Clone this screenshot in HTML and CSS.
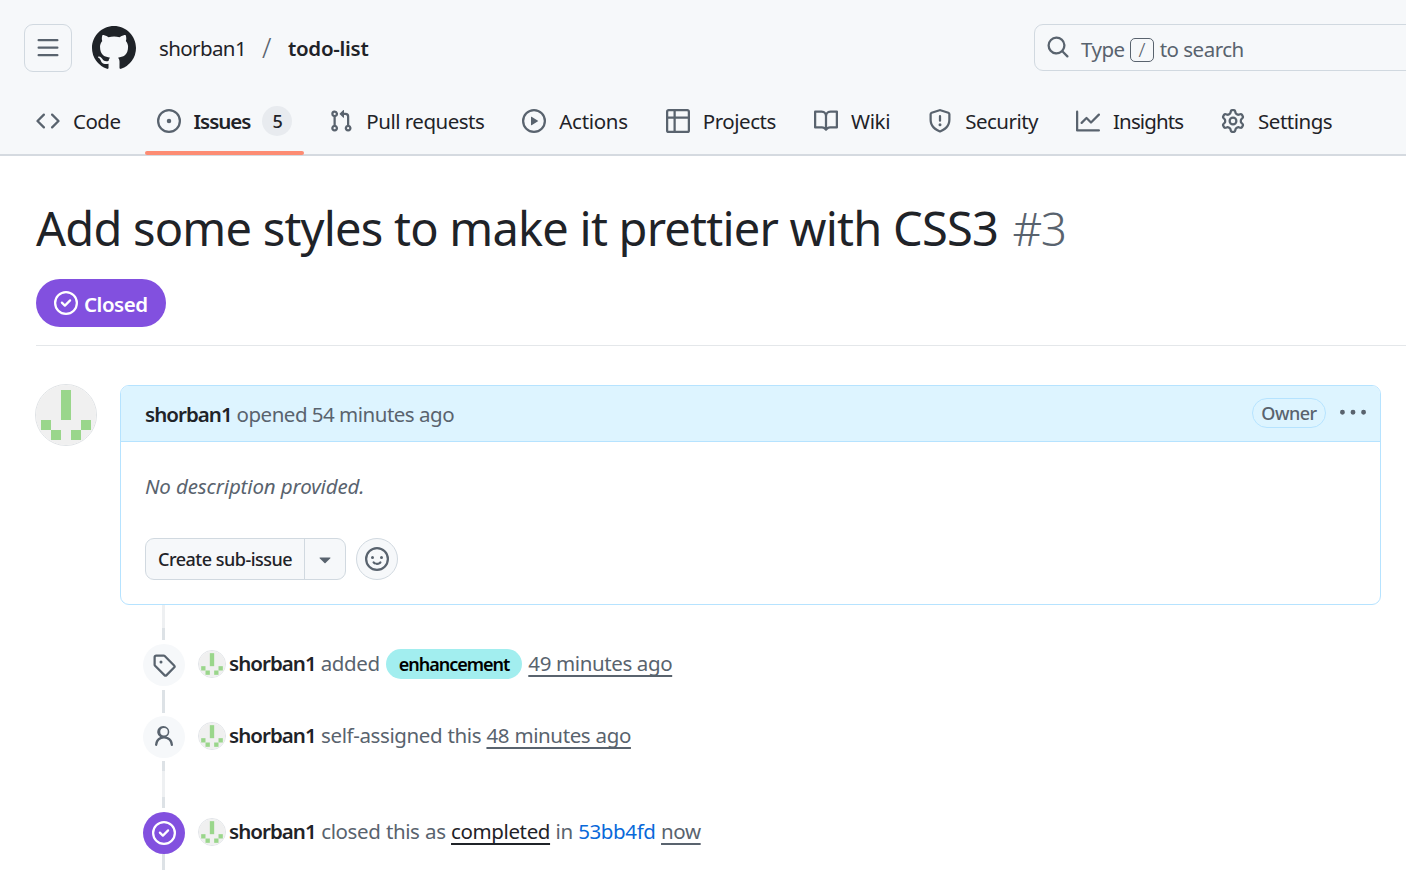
FILE: index.html
```html
<!DOCTYPE html>
<html lang="en">
<head>
<meta charset="utf-8">
<title>Add some styles to make it prettier with CSS3 #3</title>
<link rel="stylesheet" href="styles.css">
</head>
<body>
<svg class="defs" aria-hidden="true">
  <symbol id="i-bars" viewBox="0 0 16 16"><path d="M1 2.75A.75.75 0 0 1 1.75 2h12.5a.75.75 0 0 1 0 1.5H1.75A.75.75 0 0 1 1 2.75Zm0 5A.75.75 0 0 1 1.75 7h12.5a.75.75 0 0 1 0 1.5H1.75A.75.75 0 0 1 1 7.75ZM1.75 12h12.5a.75.75 0 0 1 0 1.5H1.75a.75.75 0 0 1 0-1.5Z"/></symbol>
  <symbol id="i-github" viewBox="0 0 16 16"><path d="M8 0c4.42 0 8 3.58 8 8a8.013 8.013 0 0 1-5.45 7.59c-.4.08-.55-.17-.55-.38 0-.27.01-1.13.01-2.2 0-.75-.25-1.23-.54-1.48 1.78-.2 3.65-.88 3.65-3.95 0-.88-.31-1.59-.82-2.15.08-.2.36-1.02-.08-2.12 0 0-.67-.22-2.2.82-.64-.18-1.32-.27-2-.27-.68 0-1.36.09-2 .27-1.53-1.03-2.2-.82-2.2-.82-.44 1.1-.16 1.92-.08 2.12-.51.56-.82 1.28-.82 2.15 0 3.06 1.86 3.75 3.64 3.95-.23.2-.44.55-.51 1.07-.46.21-1.61.55-2.33-.66-.15-.24-.6-.83-1.23-.82-.67.01-.27.38.01.53.34.19.73.9.82 1.13.16.45.68 1.31 2.69.94 0 .67.01 1.3.01 1.49 0 .21-.15.45-.55.38A7.995 7.995 0 0 1 0 8c0-4.42 3.58-8 8-8Z"/></symbol>
  <symbol id="i-code" viewBox="0 0 16 16"><path d="m11.28 3.22 4.25 4.25a.75.75 0 0 1 0 1.06l-4.25 4.25a.749.749 0 0 1-1.275-.326.749.749 0 0 1 .215-.734L13.94 8l-3.72-3.72a.749.749 0 0 1 .326-1.275.749.749 0 0 1 .734.215Zm-6.56 0a.751.751 0 0 1 1.042.018.751.751 0 0 1 .018 1.042L2.06 8l3.72 3.72a.749.749 0 0 1-.326 1.275.749.749 0 0 1-.734-.215L.47 8.53a.75.75 0 0 1 0-1.06Z"/></symbol>
  <symbol id="i-issue" viewBox="0 0 16 16"><path d="M8 9.5a1.5 1.5 0 1 0 0-3 1.5 1.5 0 0 0 0 3Z"/><path d="M8 0a8 8 0 1 1 0 16A8 8 0 0 1 8 0ZM1.5 8a6.5 6.5 0 1 0 13 0 6.5 6.5 0 0 0-13 0Z"/></symbol>
  <symbol id="i-pr" viewBox="0 0 16 16"><path d="M1.5 3.25a2.25 2.25 0 1 1 3 2.122v5.256a2.251 2.251 0 1 1-1.5 0V5.372A2.25 2.25 0 0 1 1.5 3.25Zm5.677-.177L9.573.677A.25.25 0 0 1 10 .854V2.5h1A2.5 2.5 0 0 1 13.5 5v5.628a2.251 2.251 0 1 1-1.5 0V5a1 1 0 0 0-1-1h-1v1.646a.25.25 0 0 1-.427.177L7.177 3.427a.25.25 0 0 1 0-.354ZM3.75 2.5a.75.75 0 1 0 0 1.5.75.75 0 0 0 0-1.5Zm0 9.5a.75.75 0 1 0 0 1.5.75.75 0 0 0 0-1.5Zm8.25.75a.75.75 0 1 0 1.5 0 .75.75 0 0 0-1.5 0Z"/></symbol>
  <symbol id="i-play" viewBox="0 0 16 16"><path d="M8 0a8 8 0 1 1 0 16A8 8 0 0 1 8 0ZM1.5 8a6.5 6.5 0 1 0 13 0 6.5 6.5 0 0 0-13 0Zm4.879-2.773 4.264 2.559a.25.25 0 0 1 0 .428l-4.264 2.559A.25.25 0 0 1 6 10.559V5.442a.25.25 0 0 1 .379-.215Z"/></symbol>
  <symbol id="i-table" viewBox="0 0 16 16"><path d="M0 1.75C0 .784.784 0 1.75 0h12.5C15.216 0 16 .784 16 1.75v12.5A1.75 1.75 0 0 1 14.25 16H1.75A1.75 1.75 0 0 1 0 14.25ZM6.5 6.5v8h7.75a.25.25 0 0 0 .25-.25V6.5Zm8-1.5V1.75a.25.25 0 0 0-.25-.25H6.5V5Zm-13 1.5v7.75c0 .138.112.25.25.25H5v-8ZM5 5V1.5H1.75a.25.25 0 0 0-.25.25V5Z"/></symbol>
  <symbol id="i-book" viewBox="0 0 16 16"><path d="M0 1.75A.75.75 0 0 1 .75 1h4.253c1.227 0 2.317.59 3 1.501A3.743 3.743 0 0 1 11.006 1h4.245a.75.75 0 0 1 .75.75v10.5a.75.75 0 0 1-.75.75h-4.507a2.25 2.25 0 0 0-1.591.659l-.622.621a.75.75 0 0 1-1.06 0l-.622-.621A2.25 2.25 0 0 0 5.258 13H.75a.75.75 0 0 1-.75-.75Zm7.251 10.324.004-5.073-.002-2.253A2.25 2.25 0 0 0 5.003 2.5H1.5v9h3.757a3.75 3.75 0 0 1 1.994.574ZM8.755 4.75l-.004 7.322a3.752 3.752 0 0 1 1.992-.572H14.5v-9h-3.495a2.25 2.25 0 0 0-2.25 2.25Z"/></symbol>
  <symbol id="i-shield" viewBox="0 0 16 16"><path d="M7.467.133a1.748 1.748 0 0 1 1.066 0l5.25 1.68A1.75 1.75 0 0 1 15 3.48V7c0 1.566-.32 3.182-1.303 4.682-.983 1.498-2.585 2.813-5.032 3.855a1.697 1.697 0 0 1-1.33 0c-2.447-1.042-4.049-2.357-5.032-3.855C1.32 10.182 1 8.566 1 7V3.48a1.75 1.75 0 0 1 1.217-1.667Zm.61 1.429a.25.25 0 0 0-.153 0l-5.25 1.68a.25.25 0 0 0-.174.238V7c0 1.358.275 2.666 1.057 3.86.784 1.194 2.121 2.34 4.366 3.297a.196.196 0 0 0 .154 0c2.245-.956 3.582-2.104 4.366-3.298C13.225 9.666 13.5 8.36 13.5 7V3.48a.251.251 0 0 0-.174-.237l-5.25-1.68ZM8.75 4.75v3a.75.75 0 0 1-1.5 0v-3a.75.75 0 0 1 1.5 0ZM9 10.5a1 1 0 1 1-2 0 1 1 0 0 1 2 0Z"/></symbol>
  <symbol id="i-graph" viewBox="0 0 16 16"><path d="M1.5 1.75V13.5h13.75a.75.75 0 0 1 0 1.5H.75a.75.75 0 0 1-.75-.75V1.75a.75.75 0 0 1 1.5 0Zm14.28 2.53-5.25 5.25a.75.75 0 0 1-1.06 0L7 7.06 4.28 9.78a.751.751 0 0 1-1.042-.018.751.751 0 0 1-.018-1.042l3.25-3.25a.75.75 0 0 1 1.06 0L10 7.94l4.72-4.72a.751.751 0 0 1 1.042.018.751.751 0 0 1 .018 1.042Z"/></symbol>
  <symbol id="i-gear" viewBox="0 0 16 16"><path d="M8 0a8.2 8.2 0 0 1 .701.031C9.444.095 9.99.645 10.16 1.29l.288 1.107c.018.066.079.158.212.224.231.114.454.243.668.386.123.082.233.09.299.071l1.103-.303c.644-.176 1.392.021 1.82.63.27.385.506.792.704 1.218.315.675.111 1.422-.364 1.891l-.814.806c-.049.048-.098.147-.088.294.016.257.016.515 0 .772-.01.147.038.246.088.294l.814.806c.475.469.679 1.216.364 1.891a7.977 7.977 0 0 1-.704 1.217c-.428.61-1.176.807-1.82.63l-1.102-.302c-.067-.019-.177-.011-.3.071a5.909 5.909 0 0 1-.668.386c-.133.066-.194.158-.211.224l-.29 1.106c-.168.646-.715 1.196-1.458 1.26a8.006 8.006 0 0 1-1.402 0c-.743-.064-1.289-.614-1.458-1.26l-.289-1.106c-.018-.066-.079-.158-.212-.224a5.738 5.738 0 0 1-.668-.386c-.123-.082-.233-.09-.299-.071l-1.103.303c-.644.176-1.392-.021-1.82-.63a8.12 8.12 0 0 1-.704-1.218c-.315-.675-.111-1.422.363-1.891l.815-.806c.05-.048.098-.147.088-.294a6.214 6.214 0 0 1 0-.772c.01-.147-.038-.246-.088-.294l-.815-.806C.635 6.045.431 5.298.746 4.623a7.92 7.92 0 0 1 .704-1.217c.428-.61 1.176-.807 1.82-.63l1.102.302c.067.019.177.011.3-.071.214-.143.437-.272.668-.386.133-.066.194-.158.211-.224l.29-1.106C6.009.645 6.556.095 7.299.03 7.53.01 7.764 0 8 0Zm-.571 1.525c-.036.003-.108.036-.137.146l-.289 1.105c-.147.561-.549.967-.998 1.189-.173.086-.34.183-.5.29-.417.278-.97.423-1.529.27l-1.103-.303c-.109-.03-.175.016-.195.045-.22.312-.412.644-.573.99-.014.031-.021.11.059.19l.815.806c.411.406.562.957.53 1.456a4.709 4.709 0 0 0 0 .582c.032.499-.119 1.05-.53 1.456l-.815.806c-.081.08-.073.159-.059.19.162.346.353.677.573.989.02.03.085.076.195.046l1.102-.303c.56-.153 1.113-.008 1.53.27.161.107.328.204.501.29.447.222.85.629.997 1.189l.289 1.105c.029.109.101.143.137.146a6.6 6.6 0 0 0 1.142 0c.036-.003.108-.036.137-.146l.289-1.105c.147-.561.549-.967.998-1.189.173-.086.34-.183.5-.29.417-.278.97-.423 1.529-.27l1.103.303c.109.029.175-.016.195-.045.22-.313.411-.644.573-.99.014-.031.021-.11-.059-.19l-.815-.806c-.411-.406-.562-.957-.53-1.456a4.709 4.709 0 0 0 0-.582c-.032-.499.119-1.05.53-1.456l.815-.806c.081-.08.073-.159.059-.19a6.464 6.464 0 0 0-.573-.989c-.02-.03-.085-.076-.195-.046l-1.102.303c-.56.153-1.113.008-1.53-.27a4.44 4.44 0 0 0-.501-.29c-.447-.222-.85-.629-.997-1.189l-.289-1.105c-.029-.11-.101-.143-.137-.146a6.6 6.6 0 0 0-1.142 0ZM11 8a3 3 0 1 1-6 0 3 3 0 0 1 6 0ZM9.5 8a1.5 1.5 0 1 0-3.001.001A1.5 1.5 0 0 0 9.5 8Z"/></symbol>
  <symbol id="i-search" viewBox="0 0 16 16"><path d="M10.68 11.74a6 6 0 0 1-7.922-8.982 6 6 0 0 1 8.982 7.922l3.04 3.04a.749.749 0 0 1-.326 1.275.749.749 0 0 1-.734-.215ZM11.5 7a4.499 4.499 0 1 0-8.997 0A4.499 4.499 0 0 0 11.5 7Z"/></symbol>
  <symbol id="i-closed" viewBox="0 0 16 16"><path d="M11.28 6.78a.75.75 0 0 0-1.06-1.06L7.25 8.69 5.78 7.22a.75.75 0 0 0-1.06 1.06l2 2a.75.75 0 0 0 1.06 0l3.5-3.5Z"/><path d="M16 8A8 8 0 1 1 0 8a8 8 0 0 1 16 0Zm-1.5 0a6.5 6.5 0 1 0-13 0 6.5 6.5 0 0 0 13 0Z"/></symbol>
  <symbol id="i-kebab" viewBox="0 0 16 16"><path d="M8 9a1.5 1.5 0 1 0 0-3 1.5 1.5 0 0 0 0 3ZM1.5 9a1.5 1.5 0 1 0 0-3 1.5 1.5 0 0 0 0 3Zm13 0a1.5 1.5 0 1 0 0-3 1.5 1.5 0 0 0 0 3Z"/></symbol>
  <symbol id="i-caret" viewBox="0 0 16 16"><path d="m4.427 7.427 3.396 3.396a.25.25 0 0 0 .354 0l3.396-3.396A.25.25 0 0 0 11.396 7H4.604a.25.25 0 0 0-.177.427Z"/></symbol>
  <symbol id="i-smiley" viewBox="0 0 16 16"><path d="M8 0a8 8 0 1 1 0 16A8 8 0 0 1 8 0ZM1.5 8a6.5 6.5 0 1 0 13 0 6.5 6.5 0 0 0-13 0Zm3.82 1.636a.75.75 0 0 1 1.038.175l.007.009c.103.118.22.222.35.31.264.178.683.37 1.285.37.602 0 1.02-.192 1.285-.371.13-.088.247-.192.35-.31l.007-.008a.75.75 0 0 1 1.222.87l-.022-.015c.02.013.021.015.021.015v.001l-.001.002-.002.003-.005.007-.014.019a2.066 2.066 0 0 1-.184.213c-.16.166-.338.316-.53.445-.63.418-1.37.638-2.127.629-.946 0-1.652-.308-2.126-.63a3.331 3.331 0 0 1-.715-.657l-.014-.02-.005-.006-.002-.003v-.002h-.001l.613-.432-.614.43a.75.75 0 0 1 .183-1.044ZM12 7a1 1 0 1 1-2 0 1 1 0 0 1 2 0ZM5 8a1 1 0 1 1 0-2 1 1 0 0 1 0 2Zm5.25 2.25.592.416a97.71 97.71 0 0 0-.592-.416Z"/></symbol>
  <symbol id="i-tag" viewBox="0 0 16 16"><path d="M1 7.775V2.75C1 1.784 1.784 1 2.75 1h5.025c.464 0 .91.184 1.238.513l6.25 6.25a1.75 1.75 0 0 1 0 2.474l-5.026 5.026a1.75 1.75 0 0 1-2.474 0l-6.25-6.25A1.75 1.75 0 0 1 1 7.775Zm1.5 0c0 .066.026.13.073.177l6.25 6.25a.25.25 0 0 0 .354 0l5.025-5.025a.25.25 0 0 0 0-.354l-6.25-6.25a.25.25 0 0 0-.177-.073H2.75a.25.25 0 0 0-.25.25ZM6 5a1 1 0 1 1 0 2 1 1 0 0 1 0-2Z"/></symbol>
  <symbol id="i-person" viewBox="0 0 16 16"><path d="M10.561 8.073a6.005 6.005 0 0 1 3.432 5.142.75.75 0 1 1-1.498.07 4.5 4.5 0 0 0-8.99 0 .75.75 0 0 1-1.498-.07 6.004 6.004 0 0 1 3.431-5.142 3.999 3.999 0 1 1 4.123 0ZM10.5 4.5a2.5 2.5 0 1 0-5 0 2.5 2.5 0 0 0 5 0Z"/></symbol>
  <symbol id="i-avatar" viewBox="0 0 60 60"><rect width="60" height="60" fill="#f0f0f0"/><rect x="25" y="5" width="10" height="30" fill="#9ad68b"/><rect x="5" y="35" width="10" height="10" fill="#9ad68b"/><rect x="45" y="35" width="10" height="10" fill="#9ad68b"/><rect x="15" y="45" width="10" height="10" fill="#9ad68b"/><rect x="35" y="45" width="10" height="10" fill="#9ad68b"/></symbol>
</svg>

<header class="app-header">
  <div class="top-row">
    <button class="menu-btn"><svg class="icon"><use href="#i-bars"/></svg></button>
    <svg class="logo"><use href="#i-github"/></svg>
    <nav class="crumbs">
      <span class="owner">shorban1</span>
      <span class="slash">/</span>
      <span class="repo">todo-list</span>
    </nav>
    <div class="search">
      <svg class="icon"><use href="#i-search"/></svg>
      <span class="search-text">Type</span>
      <kbd class="slash-key">/</kbd>
      <span class="search-text search-rest">to search</span>
    </div>
  </div>
  <nav class="tabs">
    <a class="tab"><svg class="icon"><use href="#i-code"/></svg><span class="tab-text">Code</span></a>
    <a class="tab active"><svg class="icon"><use href="#i-issue"/></svg><span class="tab-text tab-strong">Issues</span><span class="counter">5</span></a>
    <a class="tab"><svg class="icon"><use href="#i-pr"/></svg><span class="tab-text">Pull requests</span></a>
    <a class="tab"><svg class="icon"><use href="#i-play"/></svg><span class="tab-text text-actions">Actions</span></a>
    <a class="tab"><svg class="icon"><use href="#i-table"/></svg><span class="tab-text text-projects">Projects</span></a>
    <a class="tab"><svg class="icon"><use href="#i-book"/></svg><span class="tab-text text-wiki">Wiki</span></a>
    <a class="tab"><svg class="icon"><use href="#i-shield"/></svg><span class="tab-text">Security</span></a>
    <a class="tab"><svg class="icon"><use href="#i-graph"/></svg><span class="tab-text text-insights">Insights</span></a>
    <a class="tab"><svg class="icon"><use href="#i-gear"/></svg><span class="tab-text">Settings</span></a>
  </nav>
</header>

<main class="issue">
  <h1 class="issue-title">Add some styles to make it prettier with CSS3 <span class="issue-num">#3</span></h1>
  <div class="state-row">
    <span class="state"><svg class="icon"><use href="#i-closed"/></svg><span class="state-text">Closed</span></span>
  </div>

  <section class="discussion">
    <div class="comment-row">
      <svg class="avatar-lg"><use href="#i-avatar"/></svg>
      <article class="comment">
        <div class="comment-head">
          <span class="meta"><b class="author">shorban1</b> opened 54 minutes ago</span>
          <span class="owner-pill">Owner</span>
          <svg class="icon kebab"><use href="#i-kebab"/></svg>
        </div>
        <div class="comment-body">
          <p class="empty">No description provided.</p>
          <div class="actions">
            <div class="split">
              <span class="split-main">Create sub-issue</span>
              <span class="split-caret"><svg class="icon"><use href="#i-caret"/></svg></span>
            </div>
            <span class="react"><svg class="icon"><use href="#i-smiley"/></svg></span>
          </div>
        </div>
      </article>
    </div>

    <div class="timeline">
      <div class="event ev-label">
        <span class="badge"><svg class="icon"><use href="#i-tag"/></svg></span>
        <svg class="avatar-sm"><use href="#i-avatar"/></svg>
        <span class="meta"><b class="author">shorban1</b> added <span class="label">enhancement</span> <a class="time">49 minutes ago</a></span>
      </div>
      <div class="event ev-assign">
        <span class="badge"><svg class="icon"><use href="#i-person"/></svg></span>
        <svg class="avatar-sm"><use href="#i-avatar"/></svg>
        <span class="meta"><b class="author">shorban1</b> self-assigned this <a class="time">48 minutes ago</a></span>
      </div>
      <div class="event ev-closed">
        <span class="badge badge-done"><svg class="icon"><use href="#i-closed"/></svg></span>
        <svg class="avatar-sm"><use href="#i-avatar"/></svg>
        <span class="meta"><b class="author">shorban1</b> closed this as <a class="time time-dark">completed</a> in <a class="sha">53bb4fd</a> <a class="time">now</a></span>
      </div>
    </div>
  </section>
</main>
</body>
</html>
```

FILE: styles.css
```css
* { box-sizing: border-box; }
html, body { margin: 0; padding: 0; height: 100%; }
body {
  width: 1406px;
  height: 888px;
  overflow: hidden;
  background: #fff;
  color: #1f2328;
  font-family: "Noto Sans", "Open Sans", sans-serif;
  font-size: 20.5px;
  letter-spacing: -0.5px;
}
.defs { display: none; }
.icon { width: 24px; height: 24px; fill: #59636e; flex: none; display: block; }

.app-header { background: #f6f8fa; height: 156px; border-bottom: 2px solid #d5dae0; }
.top-row { display: flex; align-items: center; height: 96px; padding-left: 24px; }
.menu-btn {
  width: 48px; height: 48px; padding: 0;
  display: flex; align-items: center; justify-content: center;
  background: transparent; border: 1px solid #d1d9e0; border-radius: 9px;
}
.logo { width: 44px; height: 44px; margin-left: 20px; fill: #1f2328; flex: none; }
.crumbs { display: flex; align-items: center; margin-left: 23px; }
.owner { color: #1f2328; letter-spacing: -0.6px; }
.slash { color: #59636e; margin: 0 17px 0 16px; font-size: 27px; font-weight: 300; line-height: 30px; }
.repo { font-weight: 600; letter-spacing: -0.28px; }
.search {
  margin-left: auto; margin-right: -30px; margin-top: -2px;
  width: 402px; height: 47px; display: flex; align-items: center; gap: 5px;
  padding-left: 11px; border: 1px solid #d1d9e0; border-radius: 9px; color: #59636e;
}
.search .icon { margin-right: 6px; }
.search-text { margin-top: 4px; }
.search-rest { margin-left: 1px; }
.slash-key {
  width: 24px; height: 24px; display: flex; align-items: center; justify-content: center;
  margin-top: 5px; border: 1px solid #59636e; border-radius: 5px; font: inherit; font-size: 20px; font-weight: 300;
}

.tabs { display: flex; gap: 14px; padding-left: 24px; height: 58px; }
.tab {
  height: 58px; padding: 0 12px 9px; display: flex; align-items: center; gap: 13px;
  color: #1f2328; position: relative; white-space: nowrap;
}
.tab.active { margin-left: -2px; }
.tab.active + .tab { margin-left: -1px; }
.tab-text { margin-top: 1px; }
.text-actions { letter-spacing: -0.3px; }
.text-projects { letter-spacing: -0.45px; }
.text-wiki { letter-spacing: -0.35px; }
.text-insights { letter-spacing: -0.9px; }
.tab.active::after {
  content: ""; position: absolute; left: 0; right: 0; bottom: -1px; height: 4px;
  background: #fd8c73; border-radius: 2px;
}
.tab-strong { font-weight: 600; letter-spacing: -1.03px; }
.counter {
  width: 30px; height: 30px; margin-left: -1px; border-radius: 15px;
  background: #e8ebef; display: flex; align-items: center; justify-content: center;
  font-size: 18px; font-weight: 500;
}

.issue { padding-left: 36px; }
.issue-title { margin: 0; padding-top: 41px; font-size: 47px; font-weight: 400; line-height: 63px; letter-spacing: -0.78px; white-space: nowrap; }
.issue-num { color: #59636e; font-weight: 300; font-size: 46px; letter-spacing: -1.5px; margin-left: 3px; }
.state-row { padding: 19px 0 18px; border-bottom: 1px solid #e4e7ea; }
.state {
  display: inline-flex; align-items: center; gap: 6px; height: 48px; padding: 0 19px 0 18px;
  background: #8250df; color: #fff; border-radius: 24px; font-weight: 600;
  letter-spacing: -0.5px; vertical-align: top;
}
.state-text { margin-top: 2px; }
.state .icon { fill: #fff; }

.discussion { padding-top: 38px; position: relative; }
.comment-row { display: flex; margin-left: -1px; padding-right: 25px; }
.avatar-lg { width: 62px; height: 62px; border-radius: 50%; border: 1px solid #dfe2e5; flex: none; overflow: hidden; }
.comment { flex: 1; margin-left: 23px; margin-top: 1px; height: 220px; border: 1px solid #b6e3ff; border-radius: 9px; overflow: hidden; }
.comment-head {
  height: 56px; background: #ddf4ff; border-bottom: 1px solid #b6e3ff;
  display: flex; align-items: center; padding: 0 14px 0 24px;
}
.comment-head .meta { margin-right: auto; }
.meta { color: #59636e; white-space: nowrap; }
.author { font-weight: 600; color: #1f2328; letter-spacing: -0.95px; }
.owner-pill {
  height: 30px; width: 74px; justify-content: center; border: 1px solid #b6e3ff; border-radius: 15px;
  display: flex; align-items: center; font-size: 18px; color: #59636e; font-weight: 500; margin-top: -2px;
}
.kebab { margin-left: 14px; margin-top: -2px; width: 26px; height: 26px; }
.comment-body { padding: 30px 24px 0; }
.empty { margin: 0; color: #59636e; font-style: italic; line-height: 28px; letter-spacing: -0.13px; }
.actions { display: flex; gap: 10px; margin-top: 38px; }
.split {
  display: flex; height: 42px; background: #f6f8fa; border: 1px solid #d1d9e0; border-radius: 9px;
  align-items: center; font-size: 18px; font-weight: 500;
}
.split-main { padding: 0 12px; line-height: 40px; width: 158px; white-space: nowrap; }
.split-caret { width: 41px; height: 40px; border-left: 1px solid #d1d9e0; display: flex; align-items: center; justify-content: center; }
.react {
  width: 42px; height: 42px; border-radius: 50%; border: 1px solid #d1d9e0; background: #f6f8fa;
  display: flex; align-items: center; justify-content: center;
}

.timeline {
  margin-left: 107px;
  height: 265px;
  position: relative;
  background: linear-gradient(#eef0f2 0 23px, #dde2e6 23px 35px, transparent 35px 85px, #dde2e6 85px 108px, transparent 108px 156px, #dde2e6 156px 166px, #eef0f2 166px 192px, #dde2e6 192px 203px, transparent 203px 249px, #dde2e6 249px) 19px 0 / 3px 100% no-repeat;
}
.event { position: absolute; left: 0; display: flex; align-items: center; }
.ev-label { top: 39px; }
.ev-assign { top: 111px; }
.ev-closed { top: 207px; }
.badge {
  width: 42px; height: 42px; border-radius: 50%; background: #f6f8fa;
  display: flex; align-items: center; justify-content: center; flex: none;
}
.badge-done { background: #8250df; }
.badge-done .icon { fill: #fff; }
.avatar-sm { width: 28px; height: 28px; margin-left: 13px; margin-right: 3px; border-radius: 50%; border: 1px solid #e1e4e8; flex: none; overflow: hidden; margin-top: -2px; }
.event .meta { display: block; line-height: 30px; margin-top: -4px; letter-spacing: -0.38px; }
.ev-assign .meta { word-spacing: 0.3px; }
.ev-closed .meta { word-spacing: 0.5px; }
.label {
  display: inline-block; height: 30px; line-height: 30px; padding: 0 13px; border-radius: 15px;
  background: #a2eeef; color: #000; font-size: 18px; font-weight: 600; margin: 0 1px; letter-spacing: -1px;
}
.time {
  color: #59636e; text-decoration: underline; text-decoration-thickness: 2px;
  text-underline-offset: 4px; text-decoration-skip-ink: none;
}
.time-dark { color: #1f2328; }
.sha { color: #0969da; }
```
